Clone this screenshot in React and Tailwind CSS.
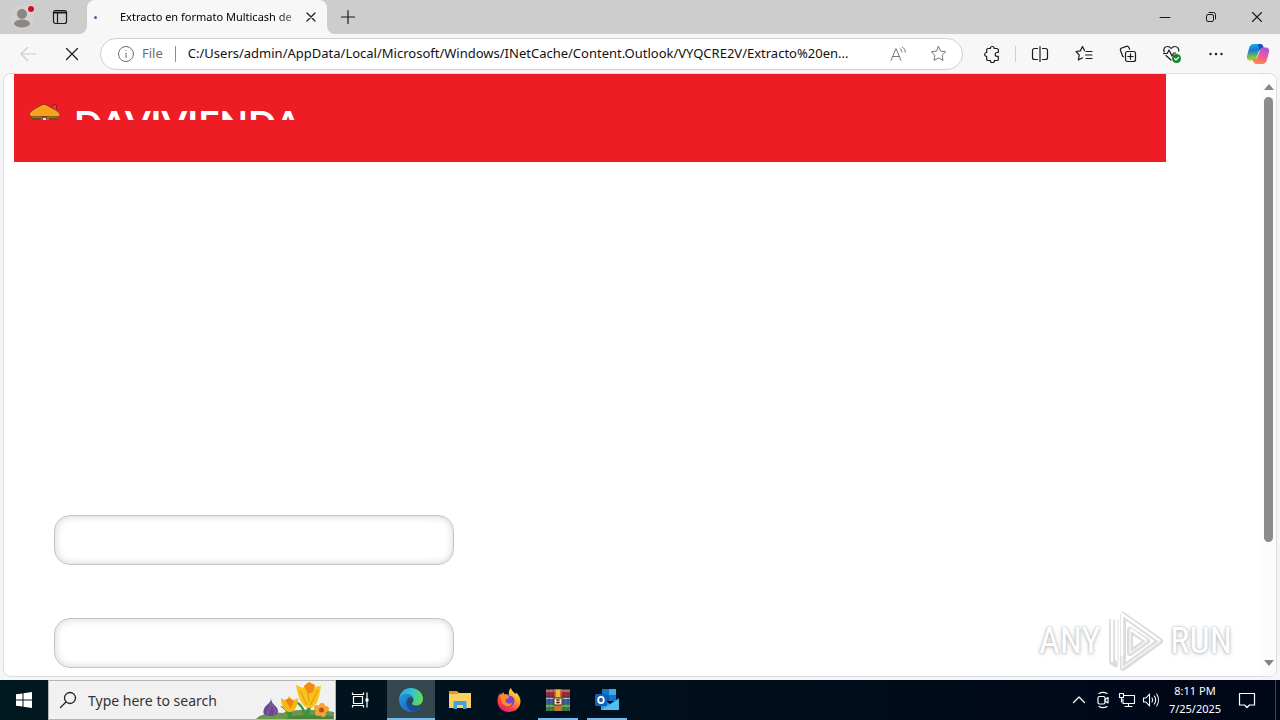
import React from 'react';

function Line({ size = 20, box = 20, className = '', children, sw = 1 }) {
  return (
    <svg width={size} height={size} viewBox={`0 0 ${box} ${box}`} fill="none" stroke="currentColor" strokeWidth={sw} strokeLinecap="round" strokeLinejoin="round" className={`shrink-0 ${className}`} aria-hidden="true">
      {children}
    </svg>
  );
}

function IconButton({ label, className = '', children }) {
  return (
    <button type="button" aria-label={label} className={`flex shrink-0 items-center justify-center ${className}`}>
      {children}
    </button>
  );
}

function TitleBar() {
  return (
    <header className="flex h-[34px] shrink-0 bg-[#f7f7f7] text-[#1b1b1b]">
      <div className="flex w-[87px] shrink-0 items-center rounded-br-lg bg-[#cdcdcd]">
        <IconButton label="Profile" className="h-full w-11">
          <svg width="24" height="24" viewBox="0 0 24 24" aria-hidden="true">
            <circle cx="12" cy="12" r="12" fill="#d2d1d0" />
            <circle cx="12" cy="9" r="5" fill="#8b8784" />
            <ellipse cx="12" cy="18.5" rx="8" ry="4" fill="#8b8784" />
            <circle cx="21" cy="4" r="3.6" fill="#e6dcdc" />
            <circle cx="21" cy="4" r="3" fill="#d00f22" />
          </svg>
        </IconButton>
        <IconButton label="Tab actions" className="h-full w-8">
          <Line size={16} box={16} sw={1.2}>
            <rect x="1.5" y="1.5" width="13" height="13" rx="2" />
            <path d="M2 3h12M1.500 4h13M5.500 4v10.500" />
          </Line>
        </IconButton>
      </div>
      <div className="w-60 shrink-0 bg-[#cdcdcd]">
        <div className="flex h-full items-center rounded-t-lg bg-[#f7f7f7] pl-[7px] pr-1">
          <span className="h-[3px] w-[3px] shrink-0 rounded-full bg-[#2f6fae]" />
          <span className="ml-[23px] min-w-0 flex-1 whitespace-nowrap bg-linear-to-r from-black from-85% to-[#b5b5b5] bg-clip-text font-['Noto_Sans','Open_Sans',sans-serif] text-[11px] leading-4 text-transparent">
            Extracto en formato Multicash de
          </span>
          <IconButton label="Close tab" className="h-6 w-6">
            <Line size={16} box={16} sw={1.2}><path d="M4 4l8 8M12 4l-8 8" /></Line>
          </IconButton>
        </div>
      </div>
      <div className="flex min-w-0 flex-1 items-center justify-between rounded-bl-lg bg-[#cdcdcd]">
        <IconButton label="New tab" className="h-full w-[42px]">
          <Line size={16} box={16} sw={1.2}><path d="M8 1.500v13M1.500 8h13" /></Line>
        </IconButton>
        <div className="flex h-full">
          <IconButton label="Minimize" className="w-[46px]">
            <Line size={12} box={12}><path d="M1 6.500h10" /></Line>
          </IconButton>
          <IconButton label="Restore" className="w-[46px]">
            <Line size={12} box={12}>
              <rect x="1.500" y="3.500" width="7" height="7" rx="1.500" />
              <path d="M4 1.500h4.500a2 2 0 0 1 2 2V8" />
            </Line>
          </IconButton>
          <IconButton label="Close" className="w-[46px]">
            <Line size={12} box={12} sw={1.100}><path d="M1.500 1.500l9 9M10.500 1.500l-9 9" /></Line>
          </IconButton>
        </div>
      </div>
    </header>
  );
}

const star = 'M8.500 1.500l2.200 4.600 5 .7-3.600 3.500.9 5.100-4.500-2.400L4 15.400l.9-5.100L1.300 6.800l5-.7z';

function Copilot() {
  return (
    <svg width="24" height="24" viewBox="0 0 24 24" aria-hidden="true">
      <defs>
        <linearGradient id="cpA" x1="6" y1="2" x2="7" y2="20" gradientUnits="userSpaceOnUse">
          <stop stopColor="#16a8ea" /><stop offset=".35" stopColor="#1979d6" /><stop offset=".65" stopColor="#62bb5b" /><stop offset="1" stopColor="#f1c52c" />
        </linearGradient>
        <linearGradient id="cpB" x1="18" y1="6" x2="14" y2="22" gradientUnits="userSpaceOnUse">
          <stop stopColor="#a858d8" /><stop offset=".5" stopColor="#ec5798" /><stop offset="1" stopColor="#f98a48" />
        </linearGradient>
      </defs>
      <path d="M8 2h6.500c1.400 0 2.200 1 2.600 2.200L18 7h-2.300c-1.700 0-2.500 1-3 2.600l-2 6.200C10 18 9 18.500 7 18.500H4c-2.500 0-3.600-2-3-4.500l2-7.500C3.800 3.700 5.200 2 8 2z" fill="url(#cpA)" />
      <path d="M12 2h2.500c1.400 0 2.200 1 2.600 2.200L18 7h-2.300c-1.300 0-2 .5-2.500 1.500z" fill="#1753b8" />
      <path d="M16.500 22H10c-1.400 0-2.200-1-2.600-2.200L6.600 17h2.200c1.700 0 2.500-1 3-2.600l2-6.200c.6-1.700 1.500-2.700 3.200-2.700h3c2.500 0 3.600 2 3 4.500l-2 7.500c-.8 2.800-2.100 4.500-4.900 4.500z" fill="url(#cpB)" />
    </svg>
  );
}

function Toolbar() {
  return (
    <nav aria-label="Browser toolbar" className="flex h-[39px] shrink-0 items-center bg-[#f7f7f7] text-[#1b1b1b]">
      <IconButton label="Back" className="ml-2 h-8 w-10 text-[#c9c9c9]">
        <Line size={18} box={18} sw={1.100}><path d="M16.500 9H2M8.500 2.500L2 9l6.500 6.500" /></Line>
      </IconButton>
      <IconButton label="Stop loading" className="ml-1 h-8 w-10">
        <Line size={16} box={16} sw={1.200}><path d="M2.500 2.500l11 11M13.500 2.500l-11 11" /></Line>
      </IconButton>
      <div className="ml-2 flex h-8 min-w-0 flex-1 items-center rounded-full border border-[#cfcfcf] bg-white pl-4 pr-3">
        <Line size={18} box={18} className="text-[#6d6d6d]">
          <circle cx="9" cy="9" r="7.500" /><path d="M9 8v4.500M9 5.500v.2" />
        </Line>
        <span className="ml-[7px] font-['Noto_Sans','Open_Sans',sans-serif] text-[13px] text-[#6d6d6d]">File</span>
        <span className="mx-3 h-4 w-px shrink-0 bg-[#8c8c8c]" />
        <input
          aria-label="Address"
          readOnly
          defaultValue="C:/Users/admin/AppData/Local/Microsoft/Windows/INetCache/Content.Outlook/VYQCRE2V/Extracto%20en..."
          className="min-w-0 flex-1 bg-transparent font-['Noto_Sans','Open_Sans',sans-serif] text-[13px] text-[#111] outline-none"
        />
        <IconButton label="Read aloud" className="mr-4 h-7 w-6 text-[#767676]">
          <Line size={18} box={18}>
            <path d="M2 15.500L7 3.500l5 12M3.800 11.500h6.400M11 3.500c1.300.8 1.900 2 1.900 3.500M13.300 2c2 1.200 3 3 3 5.300" />
          </Line>
        </IconButton>
        <IconButton label="Add to favorites" className="h-7 w-6 text-[#767676]">
          <Line size={17} box={17}><path d={star} /></Line>
        </IconButton>
      </div>
      <IconButton label="Extensions" className="ml-[17px] h-8 w-6">
        <Line size={18} box={18} sw={1.200}>
          <path d="M5 3.500h2.300a2 2 0 0 1 4 0H14a1.300 1.300 0 0 1 1.300 1.300v2.700h-1.200a1.900 1.900 0 0 0 0 3.800h1.200v2.900a1.300 1.300 0 0 1-1.300 1.300h-2.600v.3a2 2 0 0 1-4 0v-.3H5a1.300 1.300 0 0 1-1.300-1.300v-2.700a2 2 0 0 1 0-4V4.800A1.300 1.300 0 0 1 5 3.500z" />
        </Line>
      </IconButton>
      <span className="ml-[11px] h-4 w-px shrink-0 bg-[#cfcfcf]" />
      <div className="ml-3 flex items-center gap-5">
        <IconButton label="Split screen" className="h-8 w-6">
          <Line size={18} box={18} sw={1.200}>
            <path d="M9 1.500v15M6.500 3.500h-3a2 2 0 0 0-2 2v7a2 2 0 0 0 2 2h3M11.500 3.500h3a2 2 0 0 1 2 2v7a2 2 0 0 1-2 2h-3" />
          </Line>
        </IconButton>
        <IconButton label="Favorites" className="h-8 w-6">
          <Line size={18} box={18} sw={1.200}>
            <path d="M9.500 5.500L7.500 1.500 5.400 5.800 1 6.500l3.200 3.300-.8 5.200 4.200-2.200M11 6.500h6M10.500 10h6.500M11 13.500h6" />
          </Line>
        </IconButton>
        <IconButton label="Collections" className="h-8 w-6">
          <Line size={18} box={18} sw={1.200}>
            <rect x="6.500" y="6.500" width="10" height="10" rx="2" />
            <path d="M11.500 8.800v5.400M8.800 11.500h5.400M4.500 11.800l-.7-.3-2.300-6a2 2 0 0 1 1.200-2.500l4.700-1.600a2 2 0 0 1 2.500 1l.7 1.800" />
          </Line>
        </IconButton>
        <IconButton label="Browser essentials" className="h-8 w-6">
          <Line size={20} box={20} sw={1.200}>
            <path d="M2.200 8C1 4.500 3 2.500 5.500 2.500c1.500 0 2.800.8 3.700 2 .9-1.200 2.200-2 3.700-2 2.500 0 4.300 2 3.800 4.700M1.500 9.500h3.700L7 6l3 6 1.700-3h2M4 11.500l5 4.500" />
            <circle cx="14.500" cy="14.500" r="4.500" fill="#16832b" stroke="none" />
            <path d="M12.500 14.500l1.500 1.500 2.600-2.700" stroke="#fff" />
          </Line>
        </IconButton>
        <IconButton label="Settings and more" className="h-8 w-6">
          <svg width="18" height="18" viewBox="0 0 18 18" fill="currentColor" aria-hidden="true"><circle cx="3.500" cy="9" r="1.200" /><circle cx="9" cy="9" r="1.200" /><circle cx="14.500" cy="9" r="1.200" /></svg>
        </IconButton>
      </div>
      <IconButton label="Copilot" className="ml-[18px] mr-[10px] h-8 w-6"><Copilot /></IconButton>
    </nav>
  );
}

function HouseLogo() {
  return (
    <svg width="34" height="17" viewBox="0 0 34 17" className="shrink-0" aria-hidden="true">
      <path d="M24 4l1.500-2.500 3 .5V6" fill="#e24a20" stroke="#7c1f18" strokeWidth=".9" />
      <path d="M2 12h30c0 1-1 1.500-2 2v3H4v-3c-1.500-.5-2.300-1-2-2z" fill="#a5701f" />
      <path d="M1.500 12C1 9.500 4 7.500 7 5.500l7-3.800c1.200-.7 2.800-.7 4 0l7 3.800c4 2 7.500 4.500 7 7-.2 1-1.500 1.500-3 1H4c-1.500.3-2.300-.5-2.500-1.500z" fill="#f9a01f" stroke="#8a2a18" strokeWidth=".9" />
      <path d="M3.500 13.500h10M20.500 13.500h10" stroke="#8d5a1c" strokeWidth="1.200" />
      <path d="M4 16h9M21 16h9" stroke="#4c4a1f" strokeWidth="1.500" />
      <path d="M14.500 17v-2.300h4V17" fill="#e9edf0" stroke="#50402f" strokeWidth=".8" />
    </svg>
  );
}

function Watermark() {
  return (
    <div className="pointer-events-none absolute bottom-1 right-11 flex items-center gap-[7px] font-['Roboto_Condensed','Open_Sans_Condensed','DejaVu_Sans_Condensed',sans-serif] text-[36px] leading-none text-white [text-shadow:0_0_2px_#b4b4b4,0_1px_4px_#bcbcbc]">
      <span>ANY</span>
      <svg width="56" height="62" viewBox="0 0 56 62" fill="none" aria-hidden="true">
        <path d="M5 9v43l6 3M16 5v53l37-27zM23 20v23l17-12z" stroke="#dcdcdc" strokeWidth="6" strokeLinejoin="round" />
        <path d="M5 52V9l6-2M15 46V4l38 27M23 19l17 12" stroke="#fff" strokeWidth="2.500" strokeLinejoin="round" />
        <path d="M11 9v46M15 46v12l38-27M23 19v24l17-12" stroke="#f0f0f0" strokeWidth="2" strokeLinejoin="round" />
      </svg>
      <span>RUN</span>
    </div>
  );
}

function PageField({ label, type }) {
  return (
    <input
      aria-label={label}
      type={type}
      className="h-[50px] w-[400px] max-w-full rounded-2xl border border-[#c4c4c4] bg-white px-4 text-base shadow-[inset_0_0_8px_rgba(0,0,0,0.18)] outline-none"
    />
  );
}

function PageView() {
  return (
    <div className="min-h-0 flex-1 bg-[#f4f5f6] px-[3px] pb-[3px]">
      <div className="relative flex h-full overflow-hidden rounded-lg border border-[#dedede] bg-white">
        <main className="min-w-0 flex-1 overflow-hidden pl-[10px] pr-[95px]">
          <div className="h-[88px] bg-[#ee1c25] pl-[14px] pt-[29px]">
            <div className="flex h-[17px] items-start gap-3 overflow-hidden">
              <HouseLogo />
              <span className="font-[Lato,sans-serif] text-[37px] font-bold leading-10 text-white">DAVIVIENDA</span>
            </div>
          </div>
          <form className="mt-[353px] flex flex-col items-start gap-[53px] pl-10">
            <PageField label="Usuario" type="text" />
            <PageField label="Clave" type="password" />
          </form>
        </main>
        <div className="flex w-[15px] shrink-0 flex-col items-center bg-[#fcfcfc] py-[9px]">
          <svg width="10" height="8" viewBox="0 0 10 8" aria-hidden="true"><path d="M0 7l5-6 5 6z" fill="#858585" /></svg>
          <div className="flex w-full flex-1 flex-col items-center py-[6px]">
            <div className="h-4/5 w-[9px] rounded-full bg-[#8b8b8b]" />
          </div>
          <svg width="10" height="8" viewBox="0 0 10 8" aria-hidden="true"><path d="M0 1l5 6 5-6z" fill="#858585" /></svg>
        </div>
        <Watermark />
      </div>
    </div>
  );
}

function Flowers() {
  return (
    <svg width="80" height="38" viewBox="0 0 80 38" className="shrink-0" aria-hidden="true">
      <path d="M1 38c5-6 18-7 27-6 12-5 38-3 51-1v7z" fill="#6a994e" />
      <path d="M30 38c8-5 33-5 48-3v3z" fill="#4f833d" />
      <path d="M49 36c-1-11-8-13-10-17 9 3 10 10 12 12 1-6 6-12 12-14-7 7-8 11-9 19zM33 36c-1-7-6-9-8-11 7 1 8 5 10 6 1-4 3-6 6-7-4 4-4 8-4 12z" fill="#3f9142" />
      <path d="M16 17c0 7 7 8 7 13 0 4-3 5-8 5s-8-2-6-7c1-4 7-5 7-11z" fill="#69488f" />
      <path d="M16 22c0 6-4 7-3 12M17 24c4 4 4 7 2 10" stroke="#9370b5" fill="none" />
      <path d="M26 17l5 3 3-5 3 5 6-3c0 8-3 14-8 14s-9-6-9-14z" fill="#f7b916" />
      <path d="M30 19l5-2 4 3-3 8z" fill="#eb8615" />
      <path d="M41 4l7 3 4-5 6 4 8-1c-1 6-2 10-3 14-2 5-5 8-9 8-6 0-11-9-13-23z" fill="#fbc31a" />
      <path d="M49 5l5-4 6 3-2 7-5 2z" fill="#f18a16" />
      <path d="M45 10c3 5 4 9 7 14M63 9c-3 4-4 10-8 15M53 12l1 9" stroke="#e3a010" fill="none" strokeWidth="1.300" />
      <g fill="#f5a435"><circle cx="67" cy="25" r="3" /><circle cx="71" cy="28" r="3" /><circle cx="68" cy="33" r="3" /><circle cx="63" cy="32" r="3" /><circle cx="62" cy="27" r="3" /></g>
      <circle cx="66.500" cy="29" r="2.500" fill="#c5491d" />
    </svg>
  );
}

function EdgeIcon() {
  return (
    <svg width="26" height="26" viewBox="0 0 26 26" aria-hidden="true">
      <defs>
        <linearGradient id="edG" x1="2" y1="5" x2="24" y2="11" gradientUnits="userSpaceOnUse"><stop stopColor="#2aa7e5" /><stop offset=".55" stopColor="#35c6c9" /><stop offset="1" stopColor="#65d957" /></linearGradient>
        <linearGradient id="edB" x1="2" y1="11" x2="17" y2="24" gradientUnits="userSpaceOnUse"><stop stopColor="#2390df" /><stop offset="1" stopColor="#1461ad" /></linearGradient>
      </defs>
      <path d="M1 12C1.500 5.500 6.500 1 13 1c7 0 12 5 12 11 0 4-3 6.500-7 6.500-2.500 0-4-1-4-2s1.500-1.500 1.500-3.500c0-3-3-5.500-7-5.500-3.500 0-6.500 2-7.500 4.500z" fill="url(#edG)" />
      <path d="M1 12c1-3 4-5 7.500-5 3.500 0 6 1.500 6.700 4-1-1-3.200-1.200-4.700 0-3.500 3-1.500 9.500 4.500 11 3 .7 6 0 8.500-2C21 23.500 17.500 25 13 25 6 25 1 19.500 1 12z" fill="url(#edB)" />
      <path d="M10.500 11c-4.500 4-2 11.500 4.500 13.500 4-.5 7-2.500 8.800-5.200-.4-.3-1-.1-1.800.2-6 2.300-13-2-11.500-8.500z" fill="#174f99" />
    </svg>
  );
}

function FolderIcon() {
  return (
    <svg width="24" height="24" viewBox="0 0 24 24" aria-hidden="true">
      <path d="M1 3h8l2 2h11v6H1z" fill="#e79a1b" />
      <path d="M1 6h8l2-1h12v15H1z" fill="#fbd25f" />
      <path d="M5.500 21v-6.500c0-1 .5-1.500 1.500-1.500h10c1 0 1.500.5 1.500 1.500V21H15v-4H9v4z" fill="#43a0dc" />
    </svg>
  );
}

function FirefoxIcon() {
  return (
    <svg width="26" height="26" viewBox="0 0 26 26" aria-hidden="true">
      <defs><linearGradient id="ff" x1="20" y1="3" x2="6" y2="24" gradientUnits="userSpaceOnUse"><stop stopColor="#ffe14a" /><stop offset=".35" stopColor="#ffa128" /><stop offset=".7" stopColor="#fb423f" /><stop offset="1" stopColor="#df1e79" /></linearGradient></defs>
      <path d="M15 1c.5 3 3 4 4.500 6l.5-1.500c3 2.500 4.500 5.500 4.500 9A11 11 0 0 1 13 25C6 25 1.500 20 1.500 14c0-3.500 1-6 3-8v2l3-3 .5 2.500c2-.5 4 0 5 1C12.500 5.500 13 2.500 15 1z" fill="url(#ff)" />
      <circle cx="13" cy="14" r="5.500" fill="#7544d2" />
      <path d="M5 8c3-1 6 0 8.500 2-1 2-4 1.500-4 3.500 1 4 5 3.500 7 2-1 4-6 5-9 2-2-2-3-5-2.500-9.500z" fill="#ff8b27" />
    </svg>
  );
}

function ArchiveIcon() {
  return (
    <svg width="26" height="24" viewBox="0 0 26 24" aria-hidden="true">
      <path d="M1 1h24v7.500H1z" fill="#a72737" /><path d="M1 8.500h24V16H1z" fill="#3e5faa" /><path d="M1 16h24v7H1z" fill="#388247" />
      <path d="M1 3h24M1 10.500h24M1 18h24" stroke="#cec2af" strokeWidth="1" />
      <path d="M4 1v22M8 1v22M19 1v22M23 1v22" stroke="#222" strokeOpacity=".3" />
      <path d="M9.500 1h7v22h-7z" fill="#ca7426" />
      <path d="M11 2h4v7h-4z" fill="#f4b83a" /><path d="M9 10h8v7H9z" fill="#ebe3ce" stroke="#593515" /><path d="M11 12h4M11 14.500h4M13 11v5" stroke="#593515" />
    </svg>
  );
}

function OutlookIcon() {
  return (
    <svg width="26" height="24" viewBox="0 0 26 24" aria-hidden="true">
      <path d="M8 1h14v12H8z" fill="#1672c4" /><path d="M15 1h7v6h-7z" fill="#39aceb" /><path d="M8 7h7v6H8z" fill="#1258a5" />
      <path d="M7 10l9 6 9-6v12H7z" fill="#2e9ce2" /><path d="M7 22l18-11v11z" fill="#54bdf1" />
      <rect x="1" y="6" width="12" height="12" rx="1.500" fill="#0f63b5" />
      <ellipse cx="7" cy="12" rx="2.800" ry="3.200" fill="none" stroke="#fff" strokeWidth="1.800" />
    </svg>
  );
}

function TaskApp({ label, active, running, children }) {
  return (
    <button type="button" aria-label={label} className={`flex h-full w-12 shrink-0 flex-col items-center ${active ? 'bg-[#34474e]' : ''}`}>
      <span className="flex flex-1 items-center pt-[2px]">{children}</span>
      <span className={`h-[2px] ${active ? 'w-full' : 'w-10'} ${running ? 'bg-[#76b9ed]' : 'bg-transparent'}`} />
    </button>
  );
}

function Taskbar() {
  return (
    <footer className="flex h-10 shrink-0 items-center bg-linear-to-r from-[#001820] to-[#000718] text-white">
      <IconButton label="Start" className="h-full w-12">
        <svg width="16" height="16" viewBox="0 0 16 16" fill="#fff" aria-hidden="true"><path d="M0 2.300L6.500 1.400v6.100H0zM7.500 1.200L16 0v7.500H7.500zM0 8.500h6.500v6.100L0 13.700zM7.500 8.500H16V16l-8.500-1.200z" /></svg>
      </IconButton>
      <label className="flex h-full w-72 shrink-0 items-center overflow-hidden border border-[#b5b5b5] bg-[#f1f1f1] pl-[10px] text-[#222]">
        <Line size={18} box={18} sw={1.300}><circle cx="11" cy="7" r="5.500" /><path d="M7 11l-5.500 5.500" /></Line>
        <input aria-label="Search" placeholder="Type here to search" className="ml-[11px] min-w-0 flex-1 bg-transparent font-['Noto_Sans','Open_Sans',sans-serif] text-[14px] outline-none placeholder:text-[#333]" />
        <Flowers />
      </label>
      <IconButton label="Task view" className="mr-[3px] h-full w-12">
        <Line size={18} box={18} sw={1.200}>
          <path d="M1.500 1.500v2h11v-2M1.500 16.500v-2h11v2M2.500 5.500h9v7h-9zM16 1.500v15" strokeLinecap="butt" />
          <path d="M14.500 7.500h3v3h-3z" fill="#fff" stroke="none" />
        </Line>
      </IconButton>
      <div className="flex h-full gap-px">
        <TaskApp label="Microsoft Edge" active running><EdgeIcon /></TaskApp>
        <TaskApp label="File Explorer"><FolderIcon /></TaskApp>
        <TaskApp label="Firefox"><FirefoxIcon /></TaskApp>
        <TaskApp label="WinRAR" running><ArchiveIcon /></TaskApp>
        <TaskApp label="Outlook" running><OutlookIcon /></TaskApp>
      </div>
      <div className="ml-auto flex h-full items-center">
        <IconButton label="Show hidden icons" className="h-full w-6">
          <Line size={14} box={14} sw={1.300}><path d="M1.500 9.500L7 4l5.500 5.500" /></Line>
        </IconButton>
        <IconButton label="Meet now" className="h-full w-6">
          <Line size={18} box={18} sw={1.200}>
            <rect x="4" y="5.500" width="7" height="7.500" rx="1.500" /><path d="M11 8.500l3-2v5.500l-3-2M5 2.500c2.300-1.300 5.700-1.300 8 0M5 15.500c2.300 1.300 5.700 1.300 8 0" />
          </Line>
        </IconButton>
        <IconButton label="Network" className="h-full w-6">
          <Line size={18} box={18} sw={1.100}><path d="M6 4.500h10.500v8H5V8M10.500 12.500v3M7 15.500h7M1.500 2.500h4v4h-4zM3.500 6.500V11" /></Line>
        </IconButton>
        <IconButton label="Volume" className="h-full w-6">
          <Line size={18} box={18} sw={1.100}><path d="M1.500 7h2.500l3.500-4v12L4 11H1.500zM10 7c.8 1.200.8 2.800 0 4M12.300 5c1.700 2.500 1.700 5.500 0 8M14.700 3c2.300 3.500 2.300 8.500 0 12" /></Line>
        </IconButton>
        <button type="button" className="flex h-full w-16 flex-col items-center justify-center whitespace-nowrap font-['Noto_Sans','Open_Sans',sans-serif] text-[11px] leading-[18px]">
          <span>8:11 PM</span>
          <span>7/25/2025</span>
        </button>
        <IconButton label="Notifications" className="h-full w-10">
          <Line size={18} box={18} sw={1.200}><path d="M1.500 2.500h15v11.500h-5L9 16.500 6.500 14h-5z" /></Line>
        </IconButton>
        <span className="ml-2 mr-1 h-full w-px bg-[#3c4250]" />
      </div>
    </footer>
  );
}

export default function App() {
  return (
    <div className="flex h-screen min-h-80 flex-col overflow-hidden bg-[#f7f7f7] font-['Noto_Sans','Open_Sans',sans-serif]">
      <TitleBar />
      <Toolbar />
      <PageView />
      <Taskbar />
    </div>
  );
}
